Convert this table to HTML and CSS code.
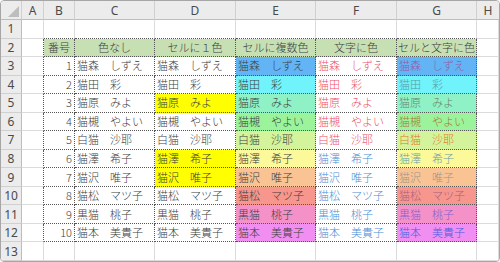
FILE: index.html
```html
<!DOCTYPE html>
<html lang="ja">
<head>
<meta charset="utf-8">
<title>Excel 色</title>
<link rel="stylesheet" href="styles.css">
</head>
<body>
<div class="frame">
  <div class="sheet">
    <div class="ch corner"><svg width="11" height="11" viewBox="0 0 11 11"><polygon points="11,0 11,11 0,11" fill="#bdbdbd"/></svg></div>
    <div class="ch">A</div><div class="ch">B</div><div class="ch">C</div><div class="ch">D</div><div class="ch">E</div><div class="ch">F</div><div class="ch">G</div><div class="ch last">H</div>

    <div class="rh">1</div>
    <div class="c"></div><div class="c top"></div><div class="c top"></div><div class="c top"></div><div class="c top"></div><div class="c top"></div><div class="c top"></div><div class="c"></div>

    <div class="rh">2</div>
    <div class="c lft"></div>
    <div class="c t hd">番号</div><div class="c t hd">色なし</div><div class="c t hd">セルに１色</div><div class="c t hd">セルに複数色</div><div class="c t hd">文字に色</div><div class="c t hd">セルと文字に色</div>
    <div class="c"></div>

    <div class="rh">3</div>
    <div class="c lft"></div>
    <div class="c t num">1</div><div class="c t">猫森　しずえ</div><div class="c t">猫森　しずえ</div><div class="c t b3">猫森　しずえ</div><div class="c t fr">猫森　しずえ</div><div class="c t b3 g3">猫森　しずえ</div>
    <div class="c"></div>

    <div class="rh">4</div>
    <div class="c lft"></div>
    <div class="c t num">2</div><div class="c t">猫田　彩</div><div class="c t">猫田　彩</div><div class="c t b4">猫田　彩</div><div class="c t fr">猫田　彩</div><div class="c t b4 g4">猫田　彩</div>
    <div class="c"></div>

    <div class="rh">5</div>
    <div class="c lft"></div>
    <div class="c t num">3</div><div class="c t">猫原　みよ</div><div class="c t y">猫原　みよ</div><div class="c t b5">猫原　みよ</div><div class="c t fr">猫原　みよ</div><div class="c t b5 g5">猫原　みよ</div>
    <div class="c"></div>

    <div class="rh">6</div>
    <div class="c lft"></div>
    <div class="c t num">4</div><div class="c t">猫槻　やよい</div><div class="c t">猫槻　やよい</div><div class="c t b6">猫槻　やよい</div><div class="c t fr">猫槻　やよい</div><div class="c t b6 g6">猫槻　やよい</div>
    <div class="c"></div>

    <div class="rh">7</div>
    <div class="c lft"></div>
    <div class="c t num">5</div><div class="c t">白猫　沙耶</div><div class="c t">白猫　沙耶</div><div class="c t b7">白猫　沙耶</div><div class="c t fr">白猫　沙耶</div><div class="c t b7 g7">白猫　沙耶</div>
    <div class="c"></div>

    <div class="rh">8</div>
    <div class="c lft"></div>
    <div class="c t num">6</div><div class="c t">猫澤　希子</div><div class="c t y">猫澤　希子</div><div class="c t b8">猫澤　希子</div><div class="c t fb">猫澤　希子</div><div class="c t b8 g8">猫澤　希子</div>
    <div class="c"></div>

    <div class="rh">9</div>
    <div class="c lft"></div>
    <div class="c t num">7</div><div class="c t">猫沢　唯子</div><div class="c t y">猫沢　唯子</div><div class="c t b9">猫沢　唯子</div><div class="c t fb">猫沢　唯子</div><div class="c t b9 g9">猫沢　唯子</div>
    <div class="c"></div>

    <div class="rh">10</div>
    <div class="c lft"></div>
    <div class="c t num">8</div><div class="c t">猫松　マツ子</div><div class="c t">猫松　マツ子</div><div class="c t b10">猫松　マツ子</div><div class="c t fb">猫松　マツ子</div><div class="c t b10 g10">猫松　マツ子</div>
    <div class="c"></div>

    <div class="rh">11</div>
    <div class="c lft"></div>
    <div class="c t num">9</div><div class="c t">黒猫　桃子</div><div class="c t">黒猫　桃子</div><div class="c t b11">黒猫　桃子</div><div class="c t fb">黒猫　桃子</div><div class="c t b11 g11">黒猫　桃子</div>
    <div class="c"></div>

    <div class="rh">12</div>
    <div class="c lft"></div>
    <div class="c t num">10</div><div class="c t">猫本　美貴子</div><div class="c t">猫本　美貴子</div><div class="c t b12">猫本　美貴子</div><div class="c t fb">猫本　美貴子</div><div class="c t b12 g12">猫本　美貴子</div>
    <div class="c"></div>

    <div class="rh">13</div>
    <div class="c"></div><div class="c"></div><div class="c"></div><div class="c"></div><div class="c"></div><div class="c"></div><div class="c"></div><div class="c"></div>
  </div>
</div>
</body>
</html>
```

FILE: styles.css
```css
* { box-sizing: border-box; }
html, body { margin: 0; padding: 0; background: #ffffff; }

.frame {
  width: 500px;
  height: 262px;
  border: 1px solid #a6a6a6;
  border-radius: 4px;
  overflow: hidden;
  background: #ffffff;
}

.sheet {
  display: grid;
  grid-template-columns: 21px 22px 31px 80px 81px 80px 81px 80px 1fr;
  grid-template-rows: 19px repeat(13, 1fr);
  height: 100%;
  font-family: "Noto Sans CJK JP", "Noto Sans", sans-serif;
  font-size: 11px;
  font-weight: 300;
  color: #404040;
}

.ch {
  background: #ececec;
  border-right: 1px solid #d0d0d0;
  border-bottom: 1px solid #bdbdbd;
  display: flex;
  align-items: center;
  justify-content: center;
  font-family: "Noto Sans", sans-serif;
  font-size: 12px;
  font-weight: 400;
  color: #4a4a4a;
}
.ch.last { border-right: none; }
.corner { justify-content: flex-end; align-items: flex-end; padding: 0 2px 2px 0; }
.corner svg { display: block; }

.rh {
  background: #ececec;
  border-right: 1px solid #bdbdbd;
  border-bottom: 1px solid #d0d0d0;
  display: flex;
  align-items: center;
  justify-content: center;
  font-family: "Noto Sans", sans-serif;
  font-size: 12px;
  font-weight: 400;
  color: #4a4a4a;
}

.c {
  border-right: 1px solid #dcdcdc;
  border-bottom: 1px solid #dcdcdc;
  display: flex;
  align-items: center;
  padding: 0 2px;
  white-space: nowrap;
  overflow: hidden;
  line-height: 1;
}

.top { border-bottom: 1px dotted #555555; }
.lft { border-right: 1px dotted #555555; }
.t { border-right: 1px dotted #555555; border-bottom: 1px dotted #555555; }

.hd { background: #c6dfb3; justify-content: center; padding: 0; }
.num { justify-content: flex-end; }
.y { background: #ffff00; }

.b3 { background: #62b4f4; }
.b4 { background: #70f3fa; }
.b5 { background: #8ef2c6; }
.b6 { background: #9bf49c; }
.b7 { background: #d3f49b; }
.b8 { background: #fbf99a; }
.b9 { background: #f9c394; }
.b10 { background: #f7968d; }
.b11 { background: #f491c8; }
.b12 { background: #f08ff1; }

.fr { color: #ee5068; }
.fb { color: #4d8ed6; }

.g3 { color: #9a58a6; }
.g4 { color: #5a9aa4; }
.g5 { color: #6f8468; }
.g6 { color: #a87636; }
.g7 { color: #e4742a; }
.g8 { color: #6c9ca8; }
.g9 { color: #a0948a; }
.g10 { color: #a8607e; }
.g11 { color: #8460c8; }
.g12 { color: #4a5ee0; }
```
